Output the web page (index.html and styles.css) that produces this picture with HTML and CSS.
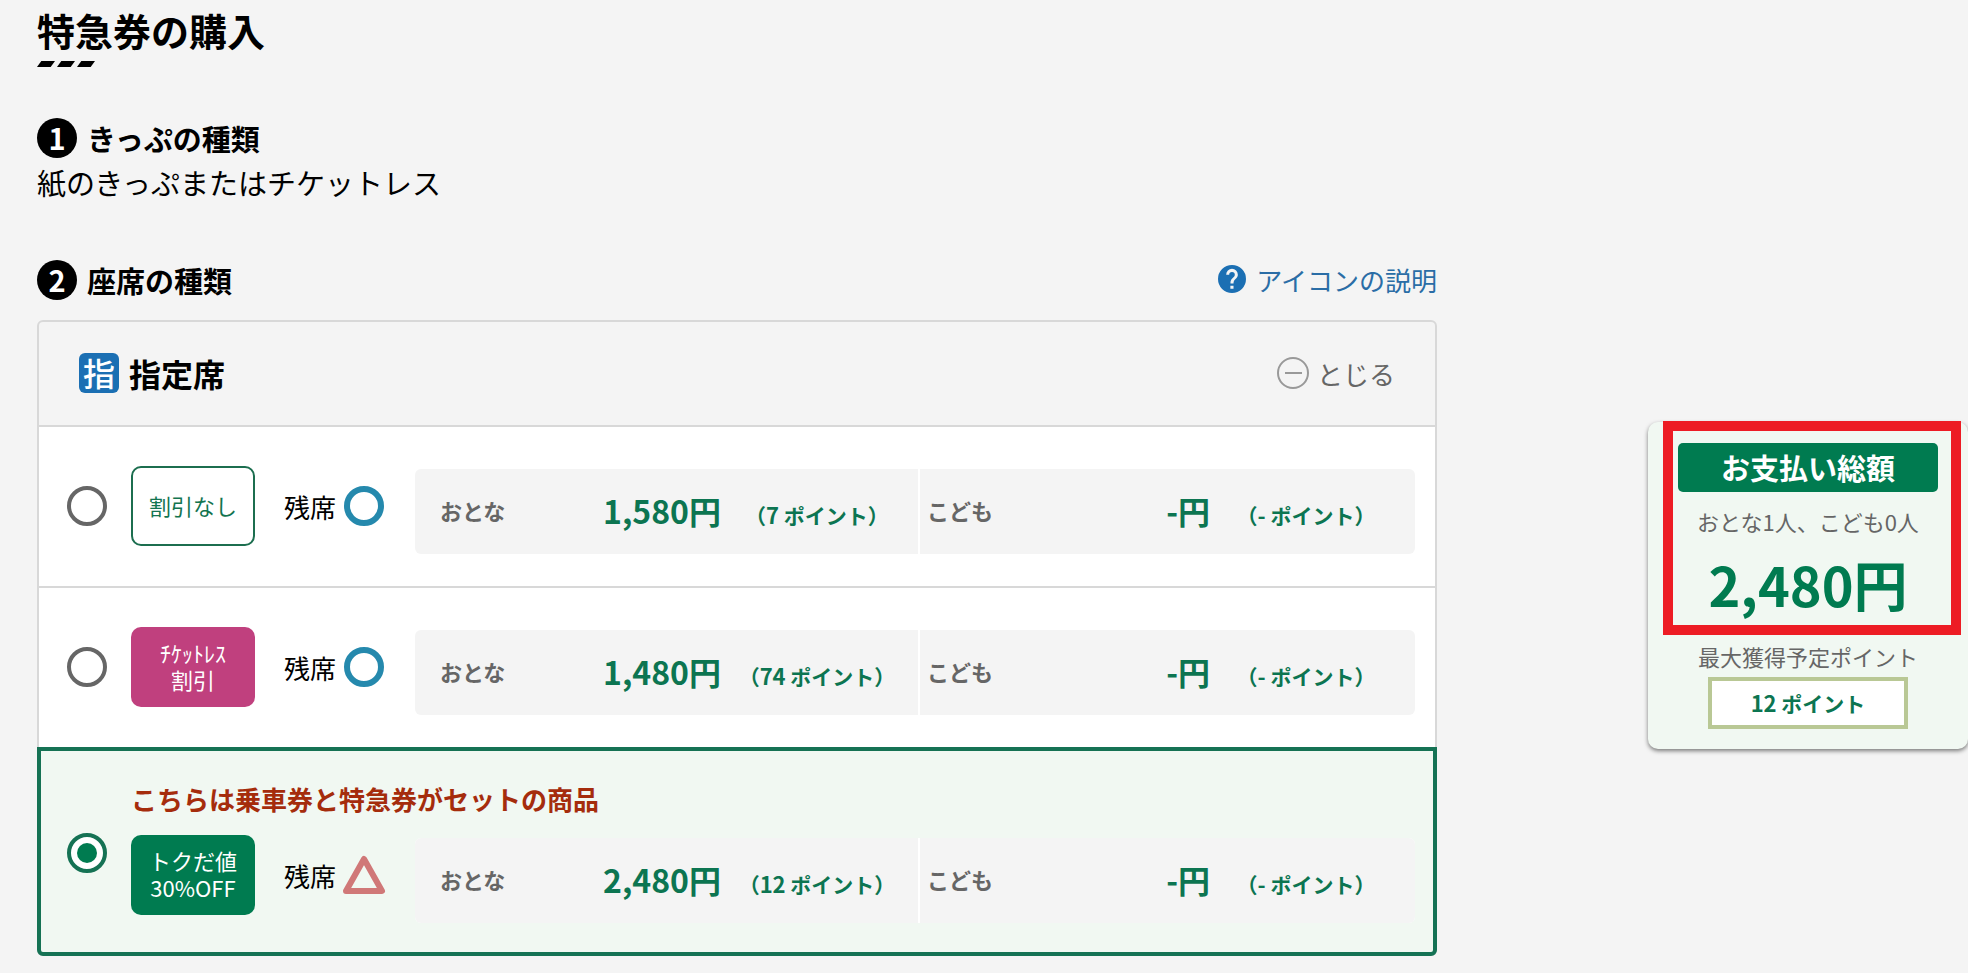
FILE: index.html
```html
<!DOCTYPE html>
<html lang="ja">
<head>
    <meta charset="UTF-8">
    <meta name="viewport" content="width=device-width, initial-scale=1.0">
    <title>特急券の購入</title>
    <link rel="stylesheet" href="styles.css">
</head>
<body>
    <div class="page">
        <main class="main">
            <h1 class="page-title">特急券の購入</h1>
            <div class="title-mark"><span></span><span></span><span></span></div>

            <section class="ticket-type">
                <h2 class="step"><span class="step-no">1</span>きっぷの種類</h2>
                <p class="ticket-name">紙のきっぷまたはチケットレス</p>
            </section>

            <section>
                <div class="step-head">
                    <h2 class="step"><span class="step-no">2</span>座席の種類</h2>
                    <a href="#" class="help">
                        <svg width="28" height="28" viewBox="0 0 24 24" aria-hidden="true"><path fill="#1b6fb3" d="M12 0a12 12 0 1 0 0 24 12 12 0 0 0 0-24zm1.300 20.400h-2.700v-2.700h2.700zm2.600-9.300l-1.100 1.100c-.9.9-1.500 1.700-1.500 3.600h-2.600v-.7c0-1.400.5-2.700 1.500-3.600l1.500-1.500c.4-.4.7-1 .7-1.700a2.400 2.400 0 0 0-4.800 0H7a5 5 0 0 1 10 0c0 1.100-.4 2.100-1.100 2.800z"/></svg>アイコンの説明
                    </a>
                </div>

                <div class="seat-panel">
                    <div class="seat-head">
                        <span class="seat-icon">指</span>
                        <h3 class="seat-name">指定席</h3>
                        <button type="button" class="close">
                            <svg width="32" height="32" viewBox="0 0 32 32" fill="none" stroke="#999" stroke-width="2" aria-hidden="true"><circle cx="16" cy="16" r="15"/><path d="M8 16h17"/></svg>とじる
                        </button>
                    </div>

                    <div class="plan">
                        <input type="radio" name="plan" id="plan1" class="radio">
                        <div class="plan-body">
                            <label for="plan1" class="tag tag-normal">割引なし</label>
                            <span class="remain">残席<svg width="44" height="40" viewBox="0 0 44 40" fill="none"><circle cx="22" cy="20" r="17" stroke="#2589ad" stroke-width="6"/></svg></span>
                            <div class="fares">
                                <div class="fare adult">
                                    <span class="who">おとな</span>
                                    <span class="price">1,580円</span>
                                    <span class="point">（<span class="num">7</span> ポイント）</span>
                                </div>
                                <div class="fare child">
                                    <span class="who">こども</span>
                                    <span class="price">-円</span>
                                    <span class="point">（<span class="num">-</span> ポイント）</span>
                                </div>
                            </div>
                        </div>
                    </div>

                    <div class="plan">
                        <input type="radio" name="plan" id="plan2" class="radio">
                        <div class="plan-body">
                            <label for="plan2" class="tag tag-ticketless">ﾁｹｯﾄﾚｽ<br>割引</label>
                            <span class="remain">残席<svg width="44" height="40" viewBox="0 0 44 40" fill="none"><circle cx="22" cy="20" r="17" stroke="#2589ad" stroke-width="6"/></svg></span>
                            <div class="fares">
                                <div class="fare adult">
                                    <span class="who">おとな</span>
                                    <span class="price">1,480円</span>
                                    <span class="point">（<span class="num">74</span> ポイント）</span>
                                </div>
                                <div class="fare child">
                                    <span class="who">こども</span>
                                    <span class="price">-円</span>
                                    <span class="point">（<span class="num">-</span> ポイント）</span>
                                </div>
                            </div>
                        </div>
                    </div>

                    <div class="plan plan-selected">
                        <input type="radio" name="plan" id="plan3" class="radio" checked>
                        <p class="plan-note">こちらは乗車券と特急券がセットの商品</p>
                        <div class="plan-body">
                            <label for="plan3" class="tag tag-tokudane">トクだ値<br>30%OFF</label>
                            <span class="remain">残席<svg width="44" height="40" viewBox="0 0 44 40" fill="none"><path d="M22 4L40 36H4z" stroke="#d07878" stroke-width="6" stroke-linejoin="round"/></svg></span>
                            <div class="fares">
                                <div class="fare adult">
                                    <span class="who">おとな</span>
                                    <span class="price">2,480円</span>
                                    <span class="point">（<span class="num">12</span> ポイント）</span>
                                </div>
                                <div class="fare child">
                                    <span class="who">こども</span>
                                    <span class="price">-円</span>
                                    <span class="point">（<span class="num">-</span> ポイント）</span>
                                </div>
                            </div>
                        </div>
                    </div>
                </div>
            </section>
        </main>

        <aside class="total">
            <div class="total-frame"></div>
            <h2 class="total-title">お支払い総額</h2>
            <p class="total-text">おとな1人、こども0人</p>
            <p class="total-price">2,480円</p>
            <p class="total-text">最大獲得予定ポイント</p>
            <p class="total-point"><span class="num">12</span> ポイント</p>
        </aside>
    </div>
</body>
</html>
```
FILE: styles.css
```css
* {
    box-sizing: border-box;
}
body {
    margin: 0;
    background-color: #f4f4f4;
    color: #000;
    font-family: "Noto Sans CJK JP", sans-serif;
    font-size: 26px;
}
h1, h2, h3, p {
    margin: 0;
}
.page {
    display: flex;
    align-items: flex-start;
    gap: 211px;
    padding-left: 37px;
}
.main {
    flex: 1;
    padding-bottom: 16px;
}
.page-title {
    padding: 2px 0 3px;
    font-size: 38px;
    line-height: 56px;
}
.title-mark {
    display: flex;
    gap: 2px;
}
.title-mark span {
    width: 18px;
    height: 6px;
    background-color: #000;
    clip-path: polygon(24% 0, 100% 0, 76% 100%, 0 100%);
}
.ticket-type {
    margin: 51px 0 55px;
}
.step {
    display: flex;
    align-items: center;
    gap: 10px;
    font-size: 29px;
    line-height: 38px;
}
.step-no {
    width: 40px;
    height: 40px;
    border-radius: 50%;
    background-color: #000;
    color: #fff;
    text-align: center;
}
.ticket-name {
    padding: 3px 0 2px;
    font-size: 29px;
    line-height: 42px;
}
.step-head {
    display: flex;
    justify-content: space-between;
    margin-bottom: 20px;
}
.help {
    display: flex;
    align-items: center;
    gap: 10px;
    height: 38px;
    color: #2a6da6;
    text-decoration: none;
}

/* 座席一覧 */
.seat-panel {
    border: 2px solid #d8d8d8;
    border-radius: 6px;
}
.seat-head {
    display: flex;
    align-items: center;
    height: 105px;
    padding: 0 40px 1px;
    border-bottom: 2px solid #d8d8d8;
}
.seat-icon {
    width: 40px;
    height: 40px;
    border-radius: 6px;
    background-color: #1b6fb3;
    color: #fff;
    font-size: 32px;
    font-weight: 500;
    line-height: 38px;
    text-align: center;
}
.seat-name {
    margin-left: 10px;
    font-size: 32px;
    line-height: 38px;
}
.close {
    display: flex;
    align-items: center;
    gap: 8px;
    margin-left: auto;
    padding: 0;
    border: none;
    background: none;
    color: #666;
    font: inherit;
    cursor: pointer;
}
.plan {
    display: grid;
    grid-template-columns: 40px 1fr;
    column-gap: 24px;
    padding: 39px 20px 32px 28px;
    background-color: #fff;
}
.plan + .plan {
    border-top: 2px solid #d8d8d8;
}
.plan-body {
    display: flex;
    grid-column: 2;
    align-items: flex-start;
}
.seat-panel .plan-selected {
    margin: 0 -2px -2px;
    padding: 28px 18px 29px 26px;
    border: 4px solid #157254;
    border-radius: 0 0 6px 6px;
    background-color: #f1f8f2;
}
.plan-note {
    padding-bottom: 17px;
    color: #a52c0c;
    font-weight: bold;
    line-height: 39px;
}
.radio {
    display: grid;
    grid-row: 1 / span 2;
    place-items: center;
    width: 40px;
    height: 40px;
    margin: 20px 0 0;
    border: 4px solid #666;
    border-radius: 50%;
    background-color: #fff;
    appearance: none;
    cursor: pointer;
}
.plan-selected .radio {
    margin-top: 54px;
}
.radio:checked {
    border-color: #157254;
}
.radio:checked::before {
    content: "";
    width: 20px;
    height: 20px;
    border-radius: 50%;
    background-color: #007b50;
}
.tag {
    display: grid;
    place-content: center;
    width: 124px;
    height: 80px;
    padding-bottom: 2px;
    border-radius: 10px;
    color: #fff;
    font-size: 22px;
    line-height: 27px;
    text-align: center;
}
.tag-normal {
    border: 2px solid #1c6e4f;
    background-color: #fff;
    color: #137450;
}
.tag-ticketless {
    background-color: #c0407e;
}
.tag-tokudane {
    background-color: #007b50;
}
.remain {
    display: flex;
    align-items: center;
    gap: 6px;
    height: 80px;
    margin: 0 29px;
}
.fares {
    display: grid;
    flex: 1;
    grid-template-columns: 503fr 495fr;
    gap: 2px;
    margin-top: 3px;
    border-radius: 6px;
    background-color: #fff;
    overflow: hidden;
}
.fare {
    display: flex;
    align-items: baseline;
    padding: 17px 5px 20px 25px;
    background-color: #f4f4f4;
    font-weight: bold;
}
.child {
    padding: 17px 13px 20px 7px;
}
.who {
    align-self: center;
    color: #666;
    font-size: 22px;
}
.price {
    margin-left: auto;
    color: #0c7551;
    font-size: 32px;
    line-height: 48px;
}
.point {
    width: 192px;
    color: #0c7551;
    font-size: 21px;
    text-align: center;
}
.num {
    font-size: 22px;
}

/* お支払い総額 */
.total {
    position: relative;
    width: 320px;
    margin-top: 422px;
    padding: 21px 30px 20px;
    border-radius: 10px;
    background-color: #f1f8f2;
    box-shadow: 0 2px 4px rgba(0, 0, 0, 0.5);
    text-align: center;
}
.total-frame {
    position: absolute;
    top: -1px;
    left: 15px;
    width: 298px;
    height: 214px;
    border: 10px solid #ed1c24;
}
.total-title {
    border-radius: 5px;
    background-color: #007b50;
    color: #fff;
    font-size: 29px;
    line-height: 49px;
}
.total-text {
    color: #666;
    font-size: 22px;
    line-height: 38px;
}
.total-title + .total-text {
    padding-top: 10px;
}
.total-price {
    padding: 2px 0 11px;
    color: #007b50;
    font-size: 54px;
    font-weight: bold;
    line-height: 84px;
}
.total-point {
    width: 200px;
    margin: 2px auto 0;
    border: 4px solid #b9c895;
    background-color: #fff;
    color: #0c7551;
    font-size: 21px;
    font-weight: bold;
    line-height: 43px;
}
```
